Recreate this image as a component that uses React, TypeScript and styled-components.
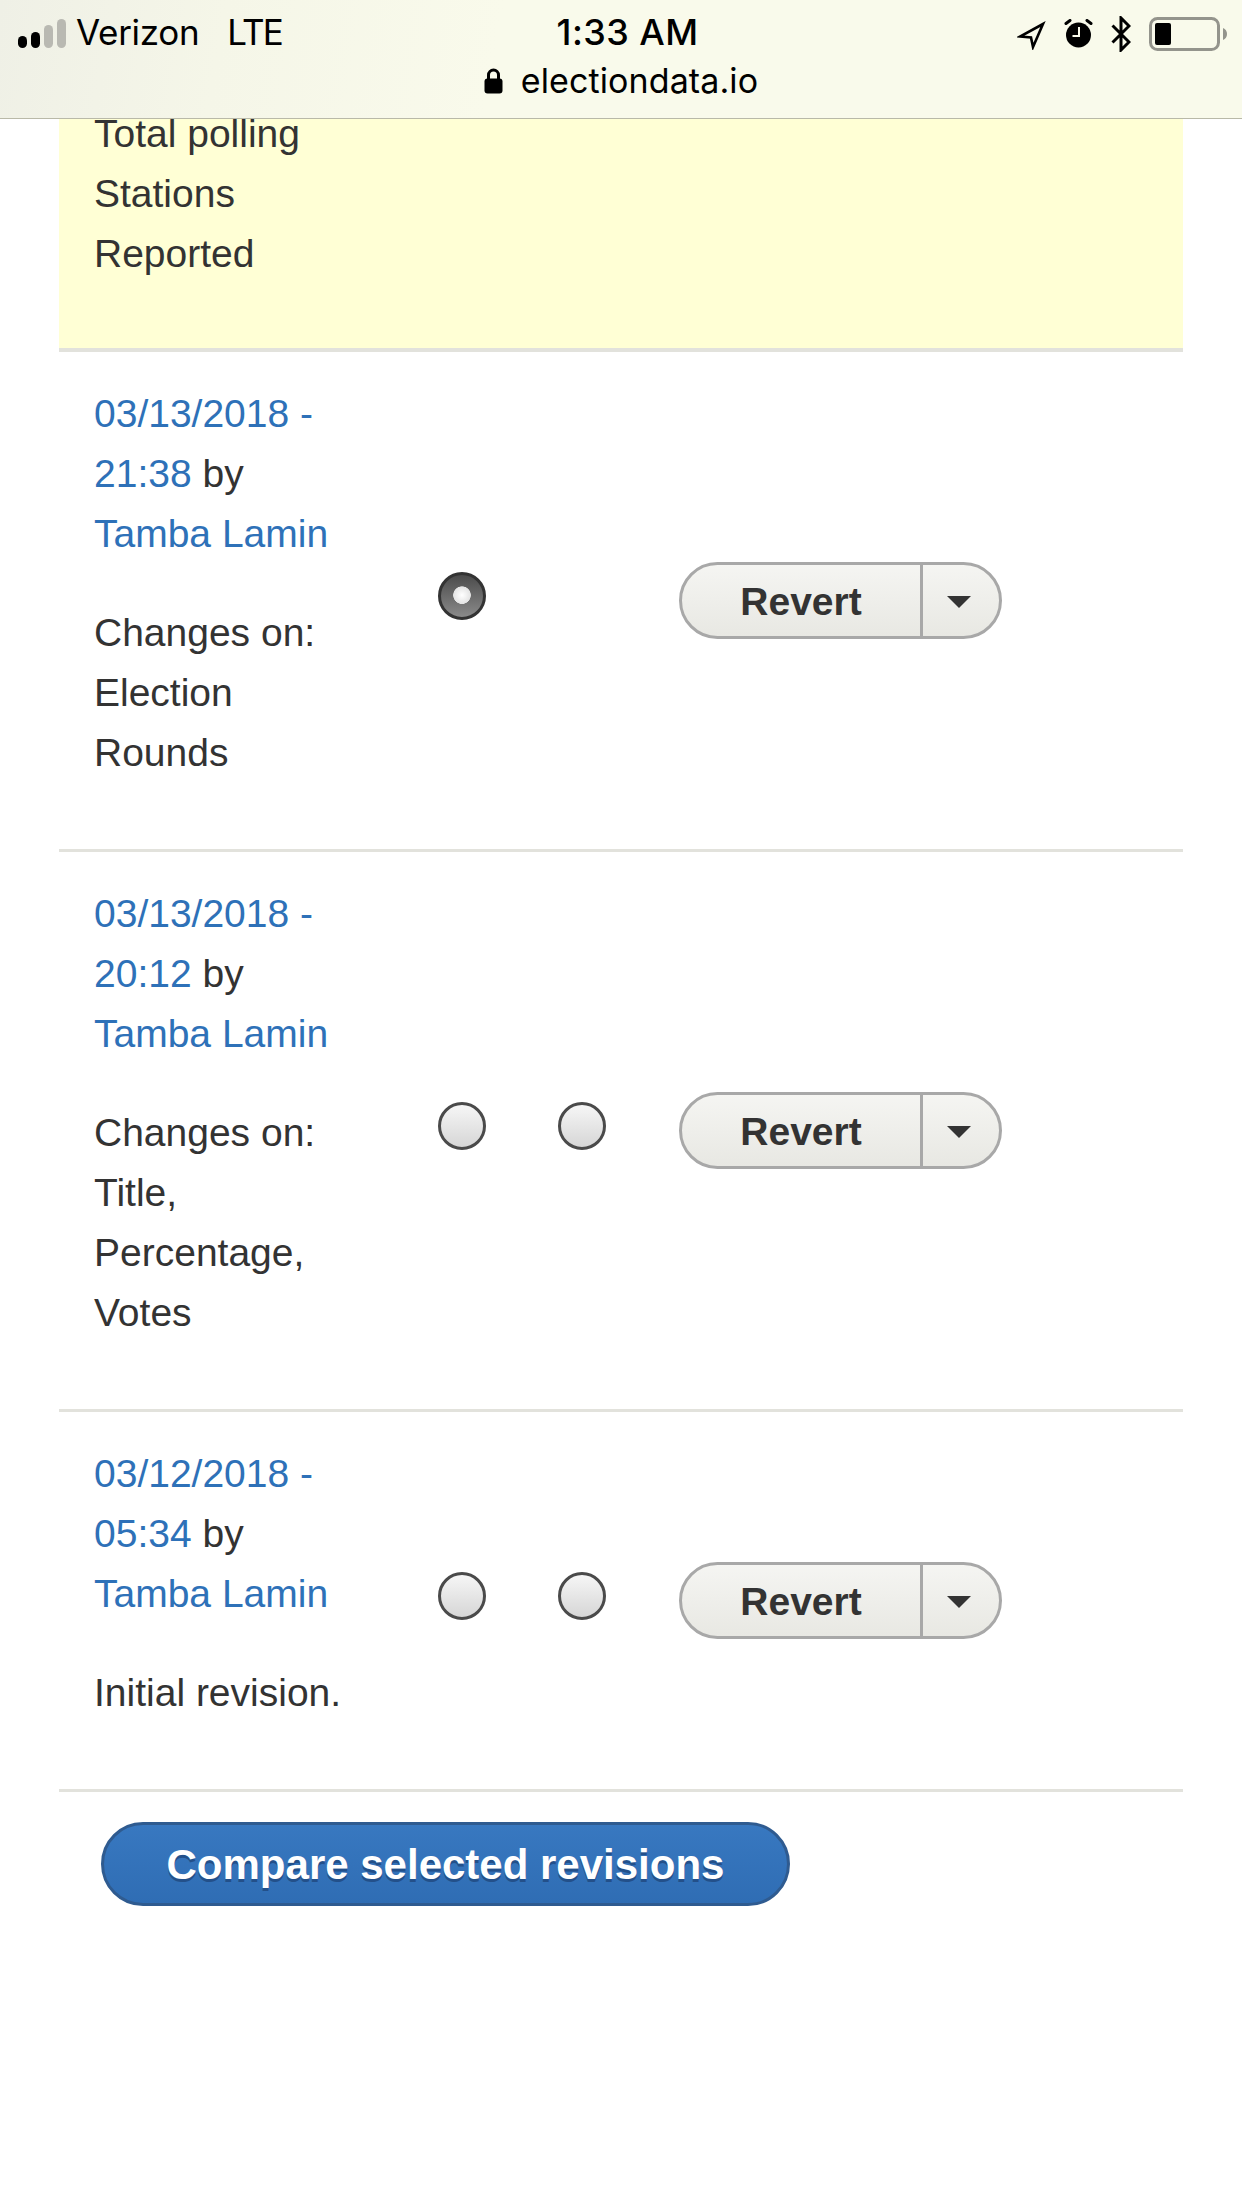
import React from "react";
import styled, { createGlobalStyle } from "styled-components";

const Global = createGlobalStyle`
  html, body { margin: 0; padding: 0; background: #fff; }
  body { font-family: "Liberation Sans", Arial, sans-serif; color: #333; }
`;

const Page = styled.div`
  position: relative;
  width: 1242px;
  height: 2208px;
  overflow: hidden;
  background: #fff;
`;

const StatusOverlay = styled.header`
  position: absolute;
  top: 0;
  left: 0;
  right: 0;
  height: 118px;
  border-bottom: 1px solid #b9b9a8;
  background: linear-gradient(100deg, #eff0e6 0%, #f5f6e8 18%, #f9faeb 40%, #f9faeb 100%);
  color: #000;
  font-family: Inter, "Liberation Sans", sans-serif;
  z-index: 2;
`;

const TopLine = styled.div`
  display: grid;
  grid-template-columns: 1fr auto 1fr;
  align-items: center;
  height: 36px;
  padding: 10px 15px 0 18px;
`;

const Carrier = styled.div`
  display: flex;
  align-items: center;
  gap: 10px;
  font-size: 35px;
  font-weight: 400;
  letter-spacing: -0.3px;
`;

const Network = styled.span`
  margin-left: 18px;
  letter-spacing: -1.8px;
`;

const Clock = styled.div`
  padding-left: 10px;
  font-size: 36px;
  font-weight: 500;
  letter-spacing: 0.4px;
`;

const StatusIcons = styled.div`
  display: flex;
  align-items: center;
  justify-content: flex-end;
  gap: 18px;
  padding-top: 3px;
`;

const UrlLine = styled.div`
  display: flex;
  align-items: center;
  justify-content: center;
  gap: 18px;
  margin-top: 14px;
  font-size: 34px;
  letter-spacing: 0.1px;
`;

const Content = styled.main`
  margin: 0 59px;
  font-size: 39px;
  line-height: 60px;
`;

const SummaryRow = styled.section`
  padding: 104px 35px 64px;
  background: #ffffd5;
  border-bottom: 4px solid #e2e2dc;
`;

const SummaryLabel = styled.div`
  width: 250px;
`;

const Row = styled.section`
  display: grid;
  grid-template-columns: 344px 120px 121px auto;
  align-items: center;
  padding-left: 35px;
  border-bottom: 3px solid #e2e2dc;
`;

const RevisionInfo = styled.div`
  width: 256px;
  padding: 32px 0 66px;
`;

const RevisionLink = styled.a`
  color: #2e71b8;
  text-decoration: none;
`;

const Log = styled.div`
  margin-top: 39px;
`;

const Radio = styled.span<{ $checked?: boolean }>`
  display: block;
  box-sizing: border-box;
  width: 48px;
  height: 48px;
  margin-bottom: 10px;
  border-radius: 50%;
  border: 3px solid ${(p) => (p.$checked ? "#333" : "#4a4a4a")};
  background: ${(p) =>
    p.$checked
      ? "radial-gradient(circle at 50% 48%, #fff 0, #e4e4e4 28%, transparent 30%), linear-gradient(#4b4b4b, #8a8a8a)"
      : "linear-gradient(#f6f6f6, #d6d6d6)"};
`;

const SplitButton = styled.div`
  display: flex;
  box-sizing: border-box;
  width: 323px;
  height: 77px;
  border: 3px solid #a8a8a8;
  border-radius: 39px;
  background: linear-gradient(#f5f5f2, #e8e8e3);
  color: #333;
  font-size: 39px;
  font-weight: 700;
`;

const ButtonLabel = styled.span`
  flex: 1;
  display: flex;
  align-items: center;
  justify-content: center;
  padding-top: 3px;
  border-right: 3px solid #a8a8a8;
`;

const Caret = styled.span`
  display: flex;
  align-items: center;
  justify-content: center;
  box-sizing: border-box;
  width: 76px;
  padding: 2px 4px 0 0;
  &::after {
    content: "";
    border-style: solid;
    border-width: 12px 12px 0;
    border-color: #333 transparent transparent;
  }
`;

const CompareButton = styled.button`
  display: block;
  box-sizing: border-box;
  width: 689px;
  height: 84px;
  margin: 30px 0 0 42px;
  padding: 2px 0 0;
  border: 3px solid #2f5b90;
  border-radius: 42px;
  background: linear-gradient(#3878c0, #2f6db4);
  color: #fff;
  font-family: inherit;
  font-size: 42px;
  font-weight: 700;
  text-shadow: 0 3px 0 #23508a;
`;

const revisions = [
  { date: "03/13/2018 - 21:38", log: "Changes on: Election Rounds", current: true },
  { date: "03/13/2018 - 20:12", log: "Changes on: Title, Percentage, Votes" },
  { date: "03/12/2018 - 05:34", log: "Initial revision." },
];

const Signal = () => (
  <svg width="48" height="30" viewBox="0 0 48 30" style={{ marginTop: 3 }}>
    <rect x="0" y="17" width="9" height="12" rx="4.5" fill="#000" />
    <rect x="13" y="13" width="9" height="16" rx="4.5" fill="#000" />
    <rect x="26" y="6" width="9" height="23" rx="4.5" fill="#b9b9b2" />
    <rect x="39" y="0" width="9" height="29" rx="4.5" fill="#b9b9b2" />
  </svg>
);

const Lock = () => (
  <svg width="19" height="26" viewBox="0 0 19 26">
    <path d="M4.5 12V7a5 5 0 0 1 10 0v5" fill="none" stroke="#000" strokeWidth="3" />
    <rect x="0.5" y="10.5" width="18" height="15" rx="3" fill="#000" />
  </svg>
);

const Location = () => (
  <svg width="29" height="29" viewBox="0 0 29 29" style={{ marginTop: 3 }}>
    <path d="M26 3 3 15.5l11 1L16 26Z" fill="none" stroke="#000" strokeWidth="2.6" strokeLinejoin="miter" />
  </svg>
);

const Alarm = () => (
  <svg width="29" height="29" viewBox="0 0 29 29">
    <circle cx="14.5" cy="16" r="12.5" fill="#000" />
    <path d="M2 4.5 6 1.5M27 4.5l-4-3" stroke="#000" strokeWidth="3" strokeLinecap="round" />
    <path d="M15 8v9H8.5" fill="none" stroke="#f9faeb" strokeWidth="2" />
  </svg>
);

const Bluetooth = () => (
  <svg width="20" height="36" viewBox="0 0 20 36">
    <path d="M1.5 9.5 18 26l-8 8V2l8 8L1.5 26.5" fill="none" stroke="#000" strokeWidth="3" />
  </svg>
);

const Battery = () => (
  <svg width="78" height="34" viewBox="0 0 78 34">
    <rect x="1.5" y="1.5" width="68" height="31" rx="7" fill="none" stroke="#94948c" strokeWidth="3" />
    <rect x="6" y="6" width="16" height="22" rx="2" fill="#000" />
    <path d="M74 11c2.5 1 4 3 4 6s-1.5 5-4 6Z" fill="#94948c" />
  </svg>
);

export default function App() {
  return (
    <Page>
      <Global />
      <StatusOverlay>
        <TopLine>
          <Carrier>
            <Signal />
            <span>Verizon</span>
            <Network>LTE</Network>
          </Carrier>
          <Clock>1:33 AM</Clock>
          <StatusIcons>
            <Location />
            <Alarm />
            <Bluetooth />
            <Battery />
          </StatusIcons>
        </TopLine>
        <UrlLine>
          <Lock />
          <span>electiondata.io</span>
        </UrlLine>
      </StatusOverlay>
      <Content>
        <SummaryRow>
          <SummaryLabel>Total polling Stations Reported</SummaryLabel>
        </SummaryRow>
        {revisions.map((r) => (
          <Row key={r.date}>
            <RevisionInfo>
              <RevisionLink href="#">{r.date}</RevisionLink> by{" "}
              <RevisionLink href="#">Tamba Lamin</RevisionLink>
              <Log>{r.log}</Log>
            </RevisionInfo>
            <Radio $checked={r.current} />
            {r.current ? <span /> : <Radio />}
            <SplitButton>
              <ButtonLabel>Revert</ButtonLabel>
              <Caret />
            </SplitButton>
          </Row>
        ))}
        <CompareButton>Compare selected revisions</CompareButton>
      </Content>
    </Page>
  );
}
